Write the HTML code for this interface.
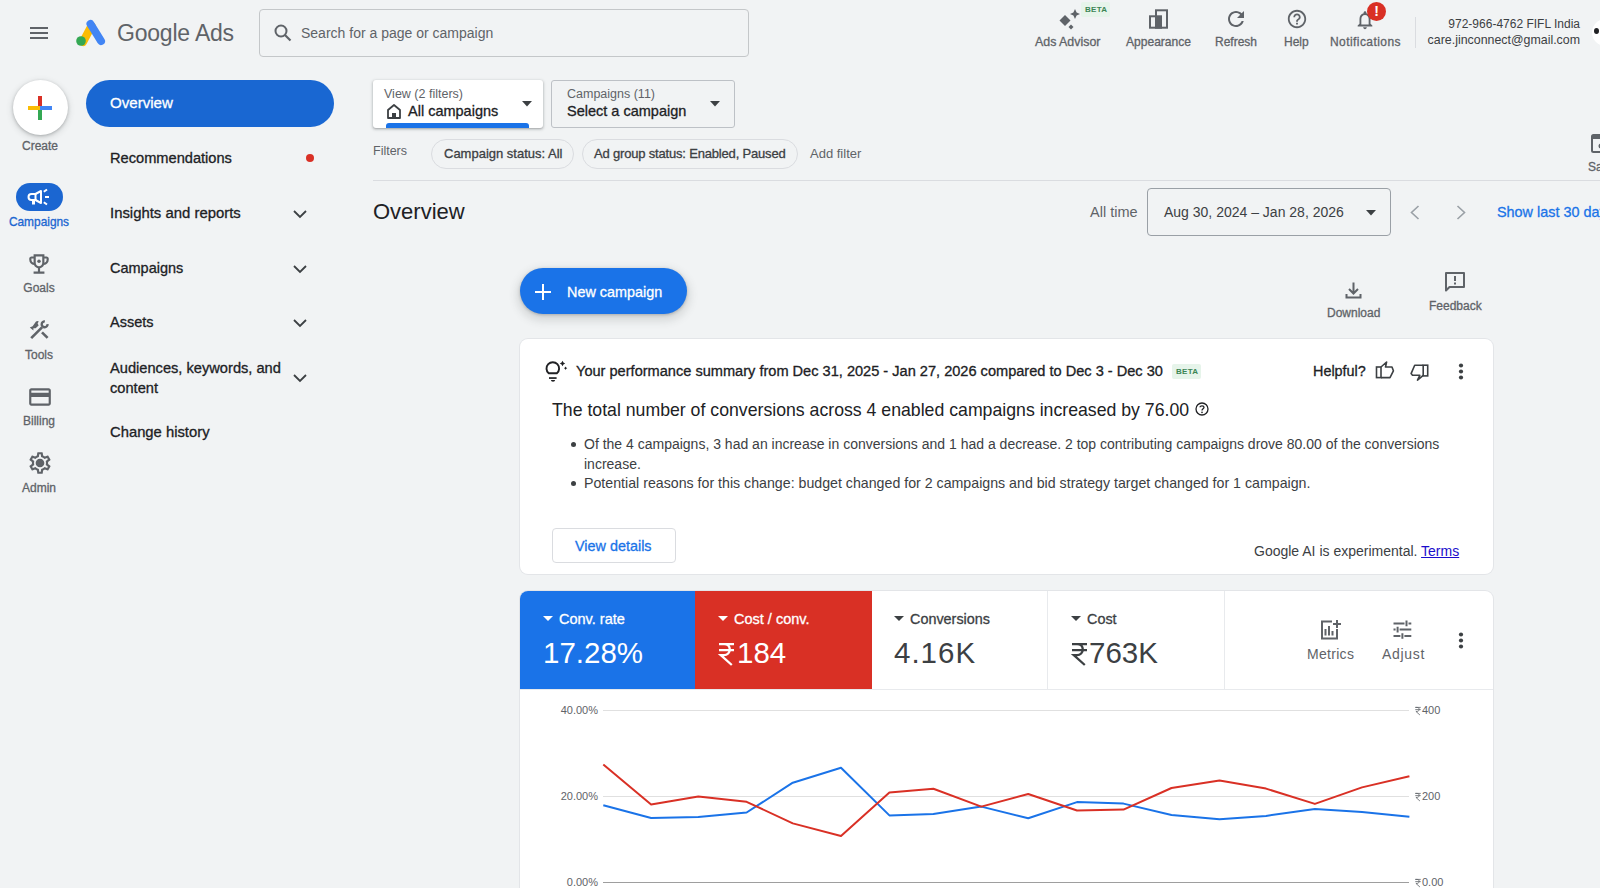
<!DOCTYPE html>
<html><head><meta charset="utf-8">
<style>
*{box-sizing:border-box;margin:0;padding:0}
html,body{width:1600px;height:888px;overflow:hidden;background:#f1f3f4;font-family:"Liberation Sans",sans-serif;color:#202124}
.a{position:absolute;white-space:nowrap}
svg{position:absolute;overflow:visible}
.m{-webkit-text-stroke-width:0.3px}
</style></head><body>
<!-- TOP BAR -->
<svg style="left:30px;top:27px" width="18" height="12" viewBox="0 0 18 12"><rect x="0" y="0" width="18" height="2" fill="#5f6368"/><rect x="0" y="5" width="18" height="2" fill="#5f6368"/><rect x="0" y="10" width="18" height="2" fill="#5f6368"/></svg>
<svg style="left:76px;top:19px" width="30" height="27" viewBox="0 0 30 27">
  <path d="M7 23 L15.5 7" stroke="#fbbc04" stroke-width="8" stroke-linecap="round"/>
  <path d="M14.5 5 L25 22" stroke="#4285f4" stroke-width="8" stroke-linecap="round"/>
  <circle cx="5" cy="22" r="4.8" fill="#34a853"/>
</svg>
<div class="a" style="left:117px;top:20px;font-size:23px;color:#5f6368;letter-spacing:-0.2px">Google Ads</div>

<div class="a" style="left:259px;top:9px;width:490px;height:48px;border:1px solid #c4c7c9;border-radius:4px"></div>
<svg style="left:274px;top:24px" width="18" height="18" viewBox="0 0 18 18"><circle cx="7" cy="7" r="5.5" fill="none" stroke="#5f6368" stroke-width="2"/><path d="M11 11 L16.5 16.5" stroke="#5f6368" stroke-width="2.2"/></svg>
<div class="a" style="left:301px;top:25px;font-size:14px;color:#5f6368">Search for a page or campaign</div>


<!-- top right actions -->
<svg style="left:1058px;top:9px" width="22" height="20" viewBox="0 0 22 20">
  <path d="M7 6 L12.5 11.5 L7 17 L1.5 11.5 Z" fill="#5f6368"/>
  <path d="M17 0 L18.6 3.4 L22 5 L18.6 6.6 L17 10 L15.4 6.6 L12 5 L15.4 3.4 Z" fill="#5f6368"/>
  <path d="M13 15.5 L15.5 18 L13 20.5 L10.5 18 Z" fill="#5f6368"/>
</svg>
<div class="a" style="left:1081px;top:2px;width:29px;height:15px;background:#e6f4ea;border-radius:2px"></div>
<div class="a" style="left:1085px;top:5px;font-size:8px;font-weight:bold;color:#3b8554;letter-spacing:0.3px">BETA</div>
<div class="a m" style="left:1035px;top:35px;font-size:12.4px;color:#5f6368">Ads Advisor</div>

<svg style="left:1148px;top:8px" width="22" height="22" viewBox="0 0 22 22"><rect x="8" y="2.3" width="11" height="17.4" fill="none" stroke="#5f6368" stroke-width="2"/><rect x="2" y="8.3" width="11" height="11.4" fill="none" stroke="#5f6368" stroke-width="2"/><rect x="8" y="8.3" width="5" height="11.4" fill="#5f6368"/></svg>
<div class="a m" style="left:1126px;top:35px;font-size:12.05px;color:#5f6368">Appearance</div>

<svg style="left:1224px;top:7px" width="24" height="24" viewBox="0 0 24 24"><path d="M17.65 6.35C16.2 4.9 14.21 4 12 4c-4.42 0-7.99 3.58-7.99 8s3.57 8 7.99 8c3.73 0 6.84-2.55 7.73-6h-2.08c-.82 2.33-3.04 4-5.65 4-3.31 0-6-2.69-6-6s2.69-6 6-6c1.66 0 3.140.69 4.22 1.78L13 11h7V4l-2.35 2.35z" fill="#5f6368"/></svg>
<div class="a m" style="left:1215px;top:35px;font-size:12px;color:#5f6368">Refresh</div>

<svg style="left:1286px;top:8px" width="22" height="22" viewBox="0 0 24 24"><path d="M11 18h2v-2h-2v2zm1-16C6.48 2 2 6.48 2 12s4.48 10 10 10 10-4.48 10-10S17.52 2 12 2zm0 18c-4.41 0-8-3.59-8-8s3.59-8 8-8 8 3.59 8 8-3.590 8-8 8zm0-14c-2.21 0-4 1.79-4 4h2c0-1.1.9-2 2-2s2 .9 2 2c0 2-3 1.75-3 5h2c0-2.25 3-2.500 3-5 0-2.21-1.79-4-4-4z" fill="#5f6368"/></svg>
<div class="a m" style="left:1284px;top:35px;font-size:12px;color:#5f6368">Help</div>

<svg style="left:1354px;top:9px" width="22" height="22" viewBox="0 0 24 24"><path d="M12 22c1.1 0 2-.9 2-2h-4c0 1.1.89 2 2 2zm6-6v-5c0-3.07-1.64-5.64-4.5-6.32V4c0-.83-.67-1.5-1.5-1.5s-1.5.67-1.5 1.5v.68C7.63 5.36 6 7.920 6 11v5l-2 2v1h16v-1l-2-2zm-2 1H8v-6c0-2.48 1.51-4.5 4-4.5s4 2.02 4 4.5v6z" fill="#5f6368"/></svg>
<div class="a" style="left:1367px;top:2px;width:19px;height:19px;border-radius:50%;background:#d93025"></div>
<div class="a" style="left:1367px;top:3px;width:19px;text-align:center;font-size:14px;font-weight:bold;color:#fff">!</div>
<div class="a m" style="left:1330px;top:35px;font-size:12px;letter-spacing:0.43px;color:#5f6368">Notifications</div>

<div class="a" style="left:1415px;top:17px;width:1px;height:31px;background:#dadce0"></div>
<div class="a" style="left:1380px;top:17px;width:200px;text-align:right;font-size:12px;color:#3c4043">972-966-4762 FIFL India</div>
<div class="a" style="left:1380px;top:33px;width:200px;text-align:right;font-size:12.4px;color:#3c4043">care.jinconnect@gmail.com</div>
<div class="a" style="left:1592px;top:19px;width:27px;height:27px;border-radius:50%;background:#fff"></div>
<div class="a" style="left:1594px;top:28px;width:5px;height:6px;border-radius:50%;background:#202124"></div>

<!-- LEFT RAIL -->
<div class="a" style="left:12.5px;top:80px;width:55px;height:55px;border-radius:50%;background:#fff;box-shadow:0 1px 3px rgba(60,64,67,.3),0 2px 6px 1px rgba(60,64,67,.15)"></div>
<svg style="left:28px;top:95.5px" width="24" height="24" viewBox="0 0 24 24">
  <rect x="10" y="0" width="4" height="12" fill="#d93025"/>
  <rect x="10" y="12" width="4" height="12" fill="#34a853"/>
  <rect x="0" y="10" width="12" height="4" fill="#fbbc04"/>
  <rect x="12" y="10" width="12" height="4" fill="#4285f4"/>
</svg>
<div class="a m" style="left:0;top:139px;width:80px;text-align:center;font-size:12px;color:#5f6368">Create</div>

<div class="a" style="left:16px;top:183px;width:47px;height:28px;border-radius:14px;background:#1b66d1"></div>
<svg style="left:27px;top:185px" width="24" height="24" viewBox="0 0 24 24"><path d="M4.5 9 H8.5 L14 6 V18 L8.5 15 H4.5 A3 3 0 0 1 4.5 9 Z" fill="none" stroke="#fff" stroke-width="2" stroke-linejoin="round"/><path d="M8.5 9 V15" stroke="#fff" stroke-width="2"/><path d="M5 15 V19.5 H8 V15 Z" fill="#fff"/><path d="M16.8 6.8 L20 4.5 M18 12 H22 M16.8 17.2 L20 19.5" stroke="#fff" stroke-width="2"/></svg>
<div class="a m" style="left:0;top:215px;width:78px;text-align:center;font-size:11.9px;color:#1b66d1">Campaigns</div>

<svg style="left:26px;top:250.5px" width="26" height="26" viewBox="0 0 24 24"><path d="M19 5h-2V3H7v2H5c-1.1 0-2 .9-2 2v1c0 2.55 1.92 4.63 4.39 4.94.63 1.5 1.98 2.630 3.61 2.96V19H7v2h10v-2h-4v-3.1c1.63-.33 2.98-1.46 3.61-2.96C19.08 12.63 21 10.55 21 8V7c0-1.1-.9-2-2-2zM5 8V7h2v3.82C5.84 10.4 5 9.3 5 8zm7 6c-1.65 0-3-1.35-3-3V5h6v6c0 1.65-1.35 3-3 3zm7-6c0 1.3-.84 2.4-2 2.82V7h2v1z" fill="#5f6368"/><circle cx="12" cy="9.5" r="1.6" fill="#5f6368"/></svg>
<div class="a m" style="left:0;top:281px;width:78px;text-align:center;font-size:12px;color:#5f6368">Goals</div>

<svg style="left:24px;top:314px" width="32" height="32" viewBox="0 0 32 32"><path d="M7.2 24.2 L18 13.4" stroke="#5f6368" stroke-width="2.6"/><path d="M23.49 10.05 A2.9 2.9 0 1 1 20.85 7.41" fill="none" stroke="#5f6368" stroke-width="2.4"/><path d="M18 18.3 L23.6 23.9" stroke="#5f6368" stroke-width="2.6"/><path d="M5.8 13.4 L8.6 12.3 L12 7.6 Q13.4 6.6 14.8 7.6 L13.6 9.3 L14.6 11.4 L11.6 14.2 L9.4 14.2 L9.4 16.6 Z" fill="#5f6368"/></svg>
<div class="a m" style="left:0;top:348px;width:78px;text-align:center;font-size:12px;color:#5f6368">Tools</div>

<svg style="left:26.5px;top:384px" width="26" height="26" viewBox="0 0 24 24"><path d="M20 4H4c-1.11 0-1.99.89-1.99 2L2 18c0 1.11.89 2 2 2h16c1.11 0 2-.89 2-2V6c0-1.11-.89-2-2-2zm0 14H4v-6h16v6zm0-10H4V6h16v2z" fill="#5f6368"/></svg>
<div class="a m" style="left:0;top:414px;width:78px;text-align:center;font-size:12px;color:#5f6368">Billing</div>

<svg style="left:26.5px;top:450px" width="26" height="26" viewBox="0 0 24 24"><path d="M19.43 12.98c.04-.32.07-.64.07-.98 0-.34-.03-.66-.07-.98l2.11-1.65c.19-.15.24-.42.12-.64l-2-3.46c-.09-.16-.26-.25-.44-.25-.06 0-.12.01-.17.03l-2.49 1c-.52-.4-1.08-.73-1.69-.98l-.38-2.65C14.46 2.18 14.25 2 14 2h-4c-.25 0-.46.18-.49.42l-.38 2.65c-.61.25-1.17.59-1.69.98l-2.49-1c-.06-.02-.12-.03-.18-.03-.17 0-.34.09-.43.25l-2 3.46c-.13.22-.07.49.12.64l2.11 1.65c-.04.32-.07.65-.07.98 0 .33.03.66.07.98l-2.11 1.65c-.19.15-.24.42-.12.64l2 3.46c.09.16.26.25.44.25.06 0 .12-.01.17-.03l2.49-1c.52.4 1.08.73 1.69.98l.38 2.65c.03.24.24.42.49.42h4c.25 0 .46-.18.49-.42l.38-2.65c.61-.25 1.17-.59 1.69-.98l2.49 1c.06.02.12.03.18.03.17 0 .34-.09.43-.25l2-3.46c.12-.22.07-.49-.12-.64l-2.11-1.65zm-1.98-1.71c.04.31.05.52.05.73 0 .21-.02.43-.05.73l-.14 1.13.89.7 1.08.84-.7 1.21-1.27-.51-1.04-.42-.9.68c-.43.32-.84.56-1.25.73l-1.06.43-.16 1.13-.2 1.35h-1.4l-.19-1.35-.16-1.13-1.06-.43c-.43-.18-.83-.41-1.23-.71l-.91-.7-1.06.43-1.27.51-.7-1.21 1.08-.84.89-.7-.14-1.13c-.03-.31-.05-.54-.05-.74s.02-.43.05-.73l.14-1.13-.89-.7-1.08-.84.7-1.21 1.27.51 1.04.42.9-.68c.43-.32.84-.56 1.25-.73l1.06-.43.16-1.13.2-1.35h1.39l.19 1.35.16 1.13 1.06.43c.43.18.83.41 1.23.71l.91.7 1.06-.43 1.27-.51.7 1.21-1.07.85-.89.7.14 1.13zM12 8c-2.21 0-4 1.79-4 4s1.79 4 4 4 4-1.79 4-4-1.79-4-4-4z" fill="#5f6368"/><circle cx="12" cy="12" r="3" fill="#5f6368"/></svg>
<div class="a m" style="left:0;top:481px;width:78px;text-align:center;font-size:12px;color:#5f6368">Admin</div>

<!-- NAV -->
<div class="a" style="left:86px;top:80px;width:248px;height:47px;border-radius:24px;background:#1967d2"></div>
<div class="a m" style="left:110px;top:94px;font-size:15.1px;color:#fff">Overview</div>
<div class="a m" style="left:110px;top:150px;font-size:14.64px;color:#202124">Recommendations</div>
<div class="a" style="left:306px;top:154px;width:8px;height:8px;border-radius:50%;background:#d93025"></div>
<div class="a m" style="left:110px;top:205px;font-size:14.9px;color:#202124">Insights and reports</div>
<div class="a m" style="left:110px;top:260px;font-size:14.5px;color:#202124">Campaigns</div>
<div class="a m" style="left:110px;top:314px;font-size:14.5px;color:#202124">Assets</div>
<div class="a m" style="left:110px;top:358px;font-size:14.65px;color:#202124;line-height:20px">Audiences, keywords, and<br>content</div>
<div class="a m" style="left:110px;top:424px;font-size:14.8px;color:#202124">Change history</div>
<svg style="left:293px;top:210px" width="14" height="9" viewBox="0 0 14 9"><path d="M1 1 L7 7 L13 1" fill="none" stroke="#3c4043" stroke-width="1.8"/></svg>
<svg style="left:293px;top:265px" width="14" height="9" viewBox="0 0 14 9"><path d="M1 1 L7 7 L13 1" fill="none" stroke="#3c4043" stroke-width="1.8"/></svg>
<svg style="left:293px;top:319px" width="14" height="9" viewBox="0 0 14 9"><path d="M1 1 L7 7 L13 1" fill="none" stroke="#3c4043" stroke-width="1.8"/></svg>
<svg style="left:293px;top:374px" width="14" height="9" viewBox="0 0 14 9"><path d="M1 1 L7 7 L13 1" fill="none" stroke="#3c4043" stroke-width="1.8"/></svg>

<!-- FILTER BAR -->
<div class="a" style="left:373px;top:80px;width:170px;height:48px;background:#fff;border-radius:3px;box-shadow:0 1px 2px rgba(60,64,67,.3),0 1px 3px 1px rgba(60,64,67,.15);overflow:hidden">
  <div class="a" style="left:13px;top:123px"></div>
  <div class="a" style="left:13px;bottom:0;width:143px;height:5px;background:#1a73e8;border-radius:3px 3px 0 0"></div>
</div>
<div class="a" style="left:384px;top:87px;font-size:12.5px;color:#5f6368">View (2 filters)</div>
<svg style="left:386px;top:103px" width="16" height="16" viewBox="0 0 16 16"><path d="M2 7 L8 2 L14 7 V15 H2 Z" fill="none" stroke="#3c4043" stroke-width="1.8" stroke-linejoin="round"/><rect x="6" y="10" width="4" height="5" fill="#3c4043"/></svg>
<div class="a m" style="left:408px;top:103px;font-size:14.5px;color:#202124">All campaigns</div>
<svg style="left:522px;top:101px" width="10" height="6" viewBox="0 0 10 6"><path d="M0 0 L10 0 L5 5.5 Z" fill="#3c4043"/></svg>

<div class="a" style="left:551px;top:80px;width:184px;height:48px;border:1px solid #bdc1c6;border-radius:3px"></div>
<div class="a" style="left:567px;top:87px;font-size:12.5px;color:#5f6368">Campaigns (11)</div>
<div class="a m" style="left:567px;top:103px;font-size:14.5px;color:#202124">Select a campaign</div>
<svg style="left:710px;top:101px" width="10" height="6" viewBox="0 0 10 6"><path d="M0 0 L10 0 L5 5.5 Z" fill="#3c4043"/></svg>

<div class="a" style="left:373px;top:144px;font-size:12.5px;color:#5f6368">Filters</div>
<div class="a" style="left:431px;top:139px;width:143px;height:30px;border:1px solid #dadce0;border-radius:15px"></div>
<div class="a m" style="left:444px;top:146px;font-size:13px;color:#3c4043">Campaign status: All</div>
<div class="a" style="left:582px;top:139px;width:216px;height:30px;border:1px solid #dadce0;border-radius:15px"></div>
<div class="a m" style="left:594px;top:146px;font-size:13px;letter-spacing:-0.18px;color:#3c4043">Ad group status: Enabled, Paused</div>
<div class="a" style="left:810px;top:146px;font-size:13px;color:#5f6368">Add filter</div>

<svg style="left:1591px;top:134px" width="18" height="19" viewBox="0 0 18 19"><rect x="1" y="1" width="16" height="17" rx="1.5" fill="none" stroke="#5f6368" stroke-width="2"/><rect x="2" y="2" width="14" height="3" fill="#5f6368"/><circle cx="10" cy="12" r="2.5" fill="#5f6368"/></svg>
<div class="a m" style="left:1588px;top:160px;font-size:12px;color:#5f6368">Sa</div>

<div class="a" style="left:373px;top:180px;width:1227px;height:1px;background:#dadce0"></div>

<!-- OVERVIEW HEADER -->
<div class="a" style="left:373px;top:199px;font-size:22px;color:#202124">Overview</div>
<div class="a" style="left:1090px;top:204px;font-size:14.5px;color:#5f6368">All time</div>
<div class="a" style="left:1147px;top:188px;width:244px;height:48px;border:1px solid #9aa0a6;border-radius:4px"></div>
<div class="a" style="left:1164px;top:204px;font-size:14px;color:#3c4043">Aug 30, 2024 &ndash; Jan 28, 2026</div>
<svg style="left:1366px;top:210px" width="10" height="6" viewBox="0 0 10 6"><path d="M0 0 L10 0 L5 5.5 Z" fill="#3c4043"/></svg>
<svg style="left:1409px;top:205px" width="11" height="15" viewBox="0 0 11 15"><path d="M9.5 1 L2.5 7.5 L9.5 14" fill="none" stroke="#9aa0a6" stroke-width="1.6"/></svg>
<svg style="left:1456px;top:205px" width="11" height="15" viewBox="0 0 11 15"><path d="M1.5 1 L8.5 7.5 L1.5 14" fill="none" stroke="#9aa0a6" stroke-width="1.6"/></svg>
<div class="a m" style="left:1497px;top:204px;font-size:14.4px;color:#1a73e8">Show last 30 days</div>

<!-- NEW CAMPAIGN -->
<div class="a" style="left:520px;top:268px;width:167px;height:46px;border-radius:23px;background:#1a73e8;box-shadow:0 1px 3px rgba(60,64,67,.3),0 4px 8px 3px rgba(60,64,67,.15)"></div>
<svg style="left:535px;top:284px" width="16" height="16" viewBox="0 0 16 16"><path d="M8 0 V16 M0 8 H16" stroke="#fff" stroke-width="2"/></svg>
<div class="a m" style="left:567px;top:284px;font-size:14.4px;color:#fff">New campaign</div>

<svg style="left:1345px;top:282px" width="17" height="17" viewBox="0 0 17 17"><path d="M8.5 0.5 V11 M4 7 L8.5 11.5 L13 7" fill="none" stroke="#5f6368" stroke-width="2"/><path d="M1.5 12 V15.5 H15.5 V12" fill="none" stroke="#5f6368" stroke-width="2"/></svg>
<div class="a m" style="left:1327px;top:306px;font-size:12px;color:#5f6368">Download</div>
<svg style="left:1445px;top:272px" width="20" height="20" viewBox="0 0 20 20"><path d="M1 1 H19 V15 H4.5 L1 18.5 Z" fill="none" stroke="#5f6368" stroke-width="2" stroke-linejoin="round"/><rect x="9" y="4" width="2" height="5" fill="#5f6368"/><rect x="9" y="10.5" width="2" height="2" fill="#5f6368"/></svg>
<div class="a m" style="left:1429px;top:299px;font-size:12px;color:#5f6368">Feedback</div>

<!-- SUMMARY CARD -->
<div class="a" style="left:520px;top:339px;width:973px;height:235px;background:#fff;border-radius:8px;box-shadow:0 0 0 1px #e3e5e8"></div>
<svg style="left:540px;top:356px" width="30" height="30" viewBox="0 0 30 30">
  <path d="M8.72 17.3 A6.3 6.3 0 1 1 16.88 17.3 Z" fill="none" stroke="#202124" stroke-width="1.9" stroke-linejoin="round"/>
  <rect x="9" y="21.2" width="7.6" height="1.7" fill="#202124"/>
  <path d="M10.9 24 H15.1 A2.1 1.8 0 0 1 10.9 24 Z" fill="#202124"/>
  <path d="M22.5 4.8 Q23.0 7.0 25.2 7.5 Q23.0 8.0 22.5 10.2 Q22.0 8.0 19.8 7.5 Q22.0 7.0 22.5 4.8 Z" fill="#202124"/>
  <path d="M25.6 10.5 Q25.950000000000003 11.85 27.3 12.2 Q25.950000000000003 12.549999999999999 25.6 13.899999999999999 Q25.25 12.549999999999999 23.900000000000002 12.2 Q25.25 11.85 25.6 10.5 Z" fill="#202124"/>
</svg>
<div class="a m" style="left:576px;top:362.5px;font-size:14.58px;color:#202124">Your performance summary from Dec 31, 2025 - Jan 27, 2026 compared to Dec 3 - Dec 30</div>
<div class="a" style="left:1172px;top:364px;width:29px;height:15px;background:#e6f4ea;border-radius:2px"></div>
<div class="a" style="left:1176px;top:367px;font-size:8px;font-weight:bold;color:#3b8554;letter-spacing:0.3px">BETA</div>
<div class="a m" style="left:1313px;top:362.5px;font-size:14.4px;color:#202124">Helpful?</div>
<svg style="left:1375px;top:361px" width="20" height="18" viewBox="0 0 20 18"><rect x="1.5" y="6" width="4.5" height="10.6" fill="none" stroke="#3c4043" stroke-width="1.6"/><path d="M6 6 L11.6 1 L10.5 6 H17 L18.4 9.8 L15 16.6 H6" fill="none" stroke="#3c4043" stroke-width="1.6" stroke-linejoin="round"/></svg>
<svg style="left:1409px;top:363px" width="20" height="18" viewBox="0 0 20 18"><rect x="14.2" y="2.2" width="4.5" height="10.7" fill="none" stroke="#3c4043" stroke-width="1.6"/><path d="M14.2 2.2 H5.7 L2.1 10.6 L3.5 12.3 H10.8 L8.5 17.1 L14.2 12.3" fill="none" stroke="#3c4043" stroke-width="1.6" stroke-linejoin="round"/></svg>
<svg style="left:1458px;top:363px" width="6" height="17" viewBox="0 0 6 17"><circle cx="3" cy="2.5" r="2.1" fill="#3c4043"/><circle cx="3" cy="8.5" r="2.1" fill="#3c4043"/><circle cx="3" cy="14.5" r="2.1" fill="#3c4043"/></svg>

<div class="a" style="left:552px;top:400px;font-size:17.7px;color:#202124">The total number of conversions across 4 enabled campaigns increased by 76.00</div>
<svg style="left:1195px;top:402px" width="14" height="14" viewBox="0 0 14 14"><circle cx="7" cy="7" r="6" fill="none" stroke="#202124" stroke-width="1.3"/><path d="M5 5.3 C5 3.3 9 3.3 9 5.3 C9 6.8 7 6.8 7 8.6" fill="none" stroke="#202124" stroke-width="1.3"/><circle cx="7" cy="10.4" r="0.8" fill="#202124"/></svg>

<div class="a" style="left:571px;top:441.5px;width:5px;height:5px;border-radius:50%;background:#3c4043"></div>
<div class="a" style="left:584px;top:434px;font-size:14px;line-height:20px;color:#3c4043">Of the 4 campaigns, 3 had an increase in conversions and 1 had a decrease. 2 top contributing campaigns drove 80.00 of the conversions<br>increase.</div>
<div class="a" style="left:571px;top:480.5px;width:5px;height:5px;border-radius:50%;background:#3c4043"></div>
<div class="a" style="left:584px;top:473px;font-size:14.2px;line-height:20px;color:#3c4043">Potential reasons for this change: budget changed for 2 campaigns and bid strategy target changed for 1 campaign.</div>

<div class="a" style="left:552px;top:528px;width:124px;height:35px;border:1px solid #dadce0;border-radius:4px"></div>
<div class="a m" style="left:575px;top:538px;font-size:14.4px;color:#1a73e8">View details</div>
<div class="a" style="left:1254px;top:543px;font-size:14px;color:#3c4043">Google AI is experimental. <span style="color:#1a0dcc;text-decoration:underline">Terms</span></div>

<!-- METRICS PANEL -->
<div class="a" style="left:520px;top:591px;width:973px;height:320px;background:#fff;border-radius:8px 8px 0 0;box-shadow:0 0 0 1px #e3e5e8"></div>
<div class="a" style="left:520px;top:591px;width:175px;height:99px;background:#1a73e8;border-radius:8px 0 0 0"></div>
<div class="a" style="left:695px;top:591px;width:177px;height:99px;background:#d93025"></div>
<div class="a" style="left:1047px;top:591px;width:1px;height:99px;background:#e8eaed"></div>
<div class="a" style="left:1224px;top:591px;width:1px;height:99px;background:#e8eaed"></div>
<div class="a" style="left:520px;top:689px;width:973px;height:1px;background:#e8eaed"></div>

<svg style="left:543px;top:616px" width="10" height="6" viewBox="0 0 10 6"><path d="M0 0 L10 0 L5 5 Z" fill="#fff"/></svg>
<div class="a m" style="left:559px;top:611px;font-size:14.5px;color:#fff">Conv. rate</div>
<div class="a" style="left:543px;top:636px;font-size:29.5px;color:#fff">17.28%</div>

<svg style="left:718px;top:616px" width="10" height="6" viewBox="0 0 10 6"><path d="M0 0 L10 0 L5 5 Z" fill="#fff"/></svg>
<div class="a m" style="left:734px;top:611px;font-size:14.5px;color:#fff">Cost / conv.</div>
<svg style="left:718.5px;top:643px" width="15" height="22" viewBox="0 0 15 22"><path d="M0 1.1 H15 M0 7.2 H15 M0.5 1.1 H5 C9.3 1.1 10.8 4 10.8 6.6 C10.8 9.6 8.4 12.2 5 12.2 H1.8 L12.8 22" fill="none" stroke="#fff" stroke-width="2.3"/></svg><div class="a" style="left:737px;top:636px;font-size:29.5px;color:#fff">184</div>

<svg style="left:894px;top:616px" width="10" height="6" viewBox="0 0 10 6"><path d="M0 0 L10 0 L5 5 Z" fill="#3c4043"/></svg>
<div class="a m" style="left:910px;top:611px;font-size:14.4px;color:#3c4043">Conversions</div>
<div class="a" style="left:894px;top:636px;font-size:29.5px;letter-spacing:1px;color:#3c4043">4.16K</div>

<svg style="left:1071px;top:616px" width="10" height="6" viewBox="0 0 10 6"><path d="M0 0 L10 0 L5 5 Z" fill="#3c4043"/></svg>
<div class="a m" style="left:1087px;top:611px;font-size:14.4px;color:#3c4043">Cost</div>
<svg style="left:1071.5px;top:643px" width="15" height="22" viewBox="0 0 15 22"><path d="M0 1.1 H15 M0 7.2 H15 M0.5 1.1 H5 C9.3 1.1 10.8 4 10.8 6.6 C10.8 9.6 8.4 12.2 5 12.2 H1.8 L12.8 22" fill="none" stroke="#3c4043" stroke-width="2.3"/></svg><div class="a" style="left:1089px;top:636px;font-size:29.5px;color:#3c4043">763K</div>

<svg style="left:1320px;top:620px" width="22" height="20" viewBox="0 0 22 20"><path d="M12 1.5 H2 V18.5 H17 V9" fill="none" stroke="#5f6368" stroke-width="2"/><path d="M5.5 9 V15.5 M9 6 V15.5 M12.5 11 V15.5" stroke="#5f6368" stroke-width="2"/><path d="M17 0 V8 M13 4 H21" stroke="#5f6368" stroke-width="2"/></svg>
<div class="a" style="left:1307px;top:646px;font-size:14px;letter-spacing:0.3px;color:#5f6368">Metrics</div>
<svg style="left:1392px;top:620px" width="20" height="19" viewBox="0 0 20 19"><path d="M1.5 3.4 H12.5 M16.5 3.4 H19.3 M14.5 0.6 V6.2 M1.5 9.6 H3.6 M7.6 9.6 H19.3 M5.6 6.8 V12.4 M1.5 16 H8.4 M12.4 16 H19.3 M10.4 13.2 V18.8" stroke="#5f6368" stroke-width="2"/></svg>
<div class="a" style="left:1382px;top:646px;font-size:14px;letter-spacing:0.7px;color:#5f6368">Adjust</div>
<svg style="left:1458px;top:632px" width="6" height="17" viewBox="0 0 6 17"><circle cx="3" cy="2.5" r="2.1" fill="#3c4043"/><circle cx="3" cy="8.5" r="2.1" fill="#3c4043"/><circle cx="3" cy="14.5" r="2.1" fill="#3c4043"/></svg>

<!-- CHART -->
<div class="a" style="left:603px;top:710px;width:806px;height:1px;background:#e0e0e0"></div>
<div class="a" style="left:603px;top:796px;width:806px;height:1px;background:#e0e0e0"></div>
<div class="a" style="left:603px;top:882px;width:806px;height:1px;background:#9e9e9e"></div>
<div class="a" style="left:500px;top:704px;width:98px;text-align:right;font-size:11px;color:#5f6368">40.00%</div>
<div class="a" style="left:500px;top:790px;width:98px;text-align:right;font-size:11px;color:#5f6368">20.00%</div>
<div class="a" style="left:500px;top:876px;width:98px;text-align:right;font-size:11px;color:#5f6368">0.00%</div>
<svg style="left:1415px;top:707px" width="6" height="8" viewBox="0 0 15 22"><path d="M0 1.1 H15 M0 7.2 H15 M0.5 1.1 H5 C9.3 1.1 10.8 4 10.8 6.6 C10.8 9.6 8.4 12.2 5 12.2 H1.8 L12.8 22" fill="none" stroke="#5f6368" stroke-width="2.2"/></svg><div class="a" style="left:1422px;top:704px;font-size:11px;color:#5f6368">400</div>
<svg style="left:1415px;top:793px" width="6" height="8" viewBox="0 0 15 22"><path d="M0 1.1 H15 M0 7.2 H15 M0.5 1.1 H5 C9.3 1.1 10.8 4 10.8 6.6 C10.8 9.6 8.4 12.2 5 12.2 H1.8 L12.8 22" fill="none" stroke="#5f6368" stroke-width="2.2"/></svg><div class="a" style="left:1422px;top:790px;font-size:11px;color:#5f6368">200</div>
<svg style="left:1415px;top:879px" width="6" height="8" viewBox="0 0 15 22"><path d="M0 1.1 H15 M0 7.2 H15 M0.5 1.1 H5 C9.3 1.1 10.8 4 10.8 6.6 C10.8 9.6 8.4 12.2 5 12.2 H1.8 L12.8 22" fill="none" stroke="#5f6368" stroke-width="2.2"/></svg><div class="a" style="left:1422px;top:876px;font-size:11px;color:#5f6368">0.00</div>
<svg style="left:0;top:0" width="1600" height="888" viewBox="0 0 1600 888">
  <polyline points="603.3,805.2 651.1,818.0 698.3,817.1 746.6,812.5 792.8,782.7 841.0,767.8 889.4,815.4 933.4,814.1 981.3,806.6 1028.2,818.2 1077.0,802.1 1123.5,803.6 1171.5,815.0 1219.5,819.2 1266.0,815.9 1314.9,809.0 1362.0,812.0 1409.4,816.8" fill="none" stroke="#1a73e8" stroke-width="2" stroke-linejoin="round"/>
  <polyline points="603.3,764.4 651.1,804.5 698.3,796.6 746.6,801.8 792.8,823.4 841.0,836.0 889.4,792.5 933.4,788.8 981.3,806.6 1028.2,794.0 1077.0,810.5 1123.5,809.6 1171.5,788.0 1219.5,780.5 1266.0,788.6 1314.9,803.9 1362.0,787.4 1409.4,776.3" fill="none" stroke="#d93025" stroke-width="2" stroke-linejoin="round"/>
</svg>
</body></html>
